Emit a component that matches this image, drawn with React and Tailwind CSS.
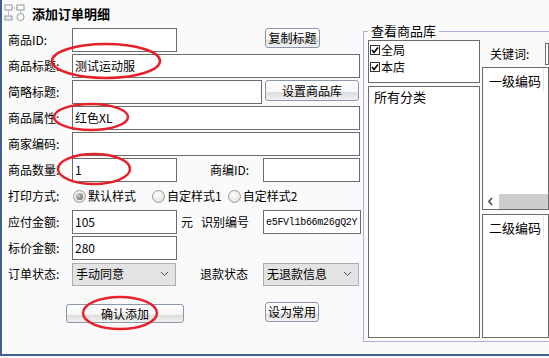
import React from "react";

const FONT = { fontFamily: '"Noto Sans CJK SC", "Liberation Sans", sans-serif' };

function Label({ children, className = "" }) {
  return <span className={`w-[64px] shrink-0 text-[12px] leading-none text-black ${className}`}>{children}</span>;
}

function Input({ value = "", className = "", textClass = "text-[12px]" }) {
  return (
    <div className={`flex h-[24px] items-center overflow-hidden whitespace-nowrap border border-[#6c6c6c] bg-white pl-[2px] ${textClass} ${className}`}>
      {value}
    </div>
  );
}

function Btn({ children, className = "" }) {
  return (
    <div
      className={`flex items-center justify-center rounded-[3px] border border-[#8a97ad] bg-[linear-gradient(#ffffff_0%,#f7f7f7_55%,#dcdcdc_62%,#f2f2f2_100%)] text-[12px] leading-none text-black ${className}`}
    >
      {children}
    </div>
  );
}

function Radio({ checked, label, className = "" }) {
  return (
    <div className={`flex items-center gap-[2px] ${className}`}>
      <span className="flex h-[13px] w-[13px] items-center justify-center rounded-full border border-[#9a9a9a] bg-[radial-gradient(circle_at_40%_35%,#ffffff,#d8d8d8)]">
        {checked && <span className="h-[7px] w-[7px] rounded-full bg-[radial-gradient(circle_at_35%_35%,#cfcfcf,#555555)]" />}
      </span>
      <span className="text-[12px] leading-none">{label}</span>
    </div>
  );
}

function Select({ value, className = "" }) {
  return (
    <div className={`flex h-[23px] items-center justify-between border border-[#adadad] bg-[#e3e3e3] pl-[3px] pr-[6px] text-[12px] ${className}`}>
      <span>{value}</span>
      <svg width="9" height="6" viewBox="0 0 9 6">
        <path d="M1 1 L4.5 4.5 L8 1" fill="none" stroke="#555" strokeWidth="1" />
      </svg>
    </div>
  );
}

function Check({ label }) {
  return (
    <div className="flex h-[17px] items-center gap-[1px]">
      <span className="flex h-[10px] w-[10px] shrink-0 items-center justify-center border border-[#333] bg-white">
        <svg width="8" height="8" viewBox="0 0 8 8">
          <path d="M1 4 L3 6.5 L7 1.5" fill="none" stroke="#000" strokeWidth="1.6" />
        </svg>
      </span>
      <span className="text-[12px] leading-none">{label}</span>
    </div>
  );
}

function TitleIcon() {
  return (
    <svg width="22" height="18" viewBox="0 0 22 18">
      <rect x="1" y="1" width="7" height="5" fill="#fff" stroke="#8a9a9a" />
      <rect x="13" y="1" width="7" height="5" fill="#fff" stroke="#8a9a9a" />
      <path d="M4.5 6 V12 M16.5 6 V10 M8 4 H13" stroke="#8a9a9a" strokeDasharray="1 1" />
      <rect x="1" y="12" width="7" height="4" fill="#e8eeee" stroke="#8a9a9a" />
      <circle cx="16.5" cy="13" r="3.5" fill="#fff" stroke="#8a9a9a" />
    </svg>
  );
}

export default function App() {
  return (
    <div style={FONT} className="relative h-[358px] w-[549px] overflow-hidden bg-[#fafafa] text-black">
      <div className="flex h-[356px] flex-col border-b-2 border-l-2 border-[#3f5f8f]">
        <div className="flex h-[28px] items-center gap-[6px] pl-[2px] pb-[2px]">
          <TitleIcon />
          <span className="text-[13px] font-bold leading-none">添加订单明细</span>
        </div>

        <div className="flex flex-1">
          {/* left form */}
          <div className="flex w-[361px] shrink-0 flex-col gap-[2px] pl-[6px]">
            <div className="flex h-[24px] items-center">
              <Label>商品ID:</Label>
              <Input className="w-[105px]" />
              <Btn className="ml-[88px] h-[20px] w-[55px] self-start">复制标题</Btn>
            </div>
            <div className="flex h-[24px] items-center">
              <Label>商品标题:</Label>
              <Input className="w-[288px]" value="测试运动服" />
            </div>
            <div className="flex h-[24px] items-center">
              <Label>简略标题:</Label>
              <Input className="w-[190px]" />
              <Btn className="ml-[3px] h-[21px] w-[94px] self-start">设置商品库</Btn>
            </div>
            <div className="flex h-[24px] items-center">
              <Label>商品属性:</Label>
              <Input className="w-[288px]" value="红色XL" />
            </div>
            <div className="flex h-[24px] items-center">
              <Label>商家编码:</Label>
              <Input className="w-[288px]" />
            </div>
            <div className="flex h-[24px] items-center">
              <Label>商品数量:</Label>
              <Input className="w-[105px]" value="1" />
              <span className="ml-[33px] w-[53px] text-[12px] leading-none">商编ID:</span>
              <Input className="w-[97px]" />
            </div>
            <div className="flex h-[24px] items-center">
              <Label>打印方式:</Label>
              <Radio checked label="默认样式" className="ml-[1px]" />
              <Radio label="自定样式1" className="ml-[16px]" />
              <Radio label="自定样式2" className="ml-[6px]" />
            </div>
            <div className="flex h-[24px] items-center">
              <Label>应付金额:</Label>
              <Input className="w-[105px]" value="105" />
              <span className="ml-[4px] text-[12px] leading-none">元</span>
              <span className="ml-[8px] w-[62px] text-[12px] leading-none">识别编号</span>
              <Input
                className="w-[98px]"
                value="e5FVl1b66m26gQ2Y"
                textClass="text-[10px] font-['Liberation_Mono',monospace] tracking-[-0.3px]"
              />
            </div>
            <div className="flex h-[24px] items-center">
              <Label>标价金额:</Label>
              <Input className="w-[105px]" value="280" />
            </div>
            <div className="flex h-[24px] items-center">
              <Label>订单状态:</Label>
              <Select className="w-[104px]" value="手动同意" />
              <span className="ml-[24px] w-[63px] text-[12px] leading-none">退款状态</span>
              <Select className="w-[96px]" value="无退款信息" />
            </div>
            <div className="mt-[16px] flex items-start">
              <Btn className="ml-[58px] h-[19px] w-[118px]">确认添加</Btn>
              <Btn className="ml-[81px] -mt-[2px] h-[20px] w-[54px]">设为常用</Btn>
            </div>
          </div>

          {/* right group box */}
          <div className="relative mb-[12px] mt-[3px] flex flex-1 gap-[2px] border border-r-0 border-[#a9b0dc] pb-[3px] pl-[4px] pt-[8px]">
            <span className="absolute -top-[8px] left-[4px] bg-[#fafafa] px-[3px] text-[13px] leading-none">查看商品库</span>
            <div className="flex w-[112px] shrink-0 flex-col gap-[3px]">
              <div className="flex h-[43px] flex-col border border-[#6c6c6c] bg-white pl-[1px]">
                <Check label="全局" />
                <Check label="本店" />
              </div>
              <div className="flex-1 border border-[#6c6c6c] bg-white pl-[5px] pt-[3px] text-[13px] leading-none">所有分类</div>
            </div>
            <div className="flex flex-1 flex-col">
              <div className="flex h-[27px] items-center">
                <span className="ml-[8px] w-[55px] shrink-0 text-[12px] leading-none">关键词:</span>
                <div className="h-[22px] flex-1 border border-[#6c6c6c] bg-white" />
              </div>
              <div className="flex h-[143px] flex-col border border-[#6c6c6c] bg-white">
                <div className="flex h-[24px] items-center">
                  <span className="w-[60px] shrink-0 pl-[6px] text-[13px] leading-none">一级编码</span>
                  <span className="h-full w-px bg-[#e5e5e5]" />
                </div>
                <div className="flex-1" />
                <div className="flex h-[15px] items-center bg-white">
                  <svg width="16" height="15" viewBox="0 0 16 15" className="shrink-0">
                    <path d="M9 4 L6 7.5 L9 11" fill="none" stroke="#555" strokeWidth="1.8" />
                  </svg>
                  <div className="h-[15px] flex-1 bg-[#cdcdcd]" />
                </div>
              </div>
              <div className="mt-[4px] flex flex-1 flex-col border border-[#6c6c6c] bg-white">
                <div className="flex h-[24px] items-center">
                  <span className="w-[60px] shrink-0 pl-[6px] text-[13px] leading-none">二级编码</span>
                  <span className="h-full w-px bg-[#e5e5e5]" />
                </div>
              </div>
            </div>
          </div>
        </div>
      </div>

      {/* red annotation marks */}
      <svg className="pointer-events-none absolute left-0 top-0" width="549" height="358">
        <g fill="none" stroke="#e3222c" strokeWidth="2.5">
          <ellipse cx="106" cy="61" rx="54" ry="17" />
          <ellipse cx="91" cy="117" rx="37" ry="13" />
          <ellipse cx="94" cy="169" rx="36" ry="15" />
          <ellipse cx="120" cy="313" rx="37" ry="16" />
        </g>
      </svg>
    </div>
  );
}
